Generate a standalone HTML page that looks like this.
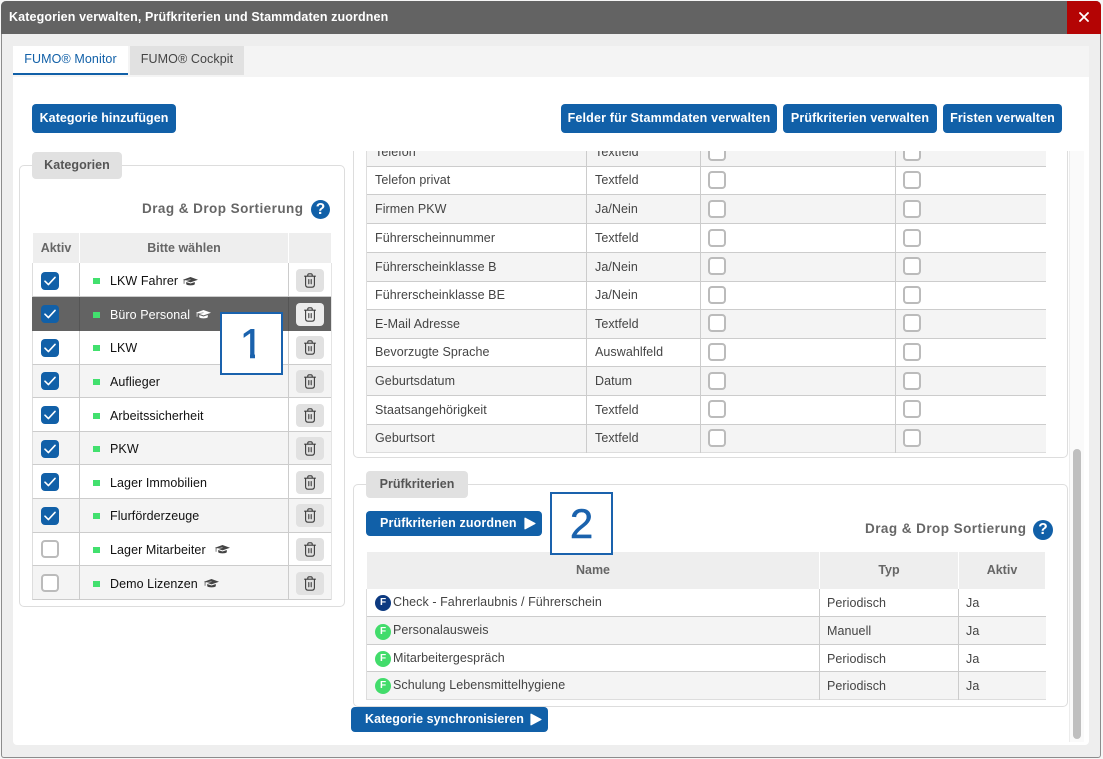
<!DOCTYPE html>
<html><head><meta charset="utf-8">
<style>
html,body{margin:0;padding:0}
body{width:1103px;height:759px;position:relative;overflow:hidden;background:#f6f6f6;font-family:"Liberation Sans",sans-serif;color:#444}
div,span,svg{position:absolute;box-sizing:border-box}
.t{white-space:nowrap;font-size:12.5px;line-height:16px;letter-spacing:.07px;color:#444}
.k{color:#111}
.b{font-weight:700;white-space:nowrap;line-height:16px;font-size:12.5px;letter-spacing:.12px}
.btn{background:#1160a8;border-radius:4px;color:#fff;font-weight:700;font-size:12.5px;letter-spacing:.12px;white-space:nowrap;text-align:center;line-height:29px;height:29px;top:104px}
.leg{background:#e1e1e1;border-radius:4px;color:#555;font-weight:700;font-size:12.5px;letter-spacing:.04px;text-align:center;line-height:27px;height:27px}
.fs{border:1px solid #ddd;border-radius:5px;background:#fff}
.hd{background:#eee;color:#666;font-weight:700;font-size:12.5px;letter-spacing:0;text-align:center;white-space:nowrap}
.row{left:32px;width:300px;border-bottom:1px solid #ccc;border-left:1px solid #ddd}
.s{background:#f4f4f4}
.cb{left:41px;width:18px;height:18px;border-radius:4px;background:#1160a8}
.cb svg{left:3px;top:4px}
.un{background:#fff;border:2px solid #bbb}
.dot{left:93px;width:7px;height:6px;background:#42e06e}
.tb{left:296px;width:28px;height:23px;background:#e1e1e1;border-radius:4px}
.tb svg{left:8px;top:4px}
.v{width:1px;background:#ccc}
.rr{left:367px;width:679px;border-bottom:1px solid #ccc}
.c2{width:18px;height:18px;border:2px solid #bbb;border-radius:4px;background:#fff}
.q{width:19px;height:19px;border-radius:50%;background:#1160a8;color:#fff;font-weight:700;font-size:15.5px;line-height:19px;text-align:center}
.f{left:375px;width:16px;height:16px;border-radius:50%;color:#fff;font-weight:700;font-size:10px;line-height:16px;text-align:center;background:#42dc6b}
.box{width:63px;height:63px;border:2px solid #1a62ad;background:#fff;color:#1a62ad;font-size:42px;line-height:59px;text-align:center;z-index:5;-webkit-text-stroke:.5px #1a62ad}
.cov{background:#fff;height:6px;top:40px}
</style></head><body>
<svg width="0" height="0" style="left:0;top:0"><defs>
<symbol id="chk" viewBox="0 0 12 10"><path d="M1 5.2L4.4 8.6L11 1.4" fill="none" stroke="#fff" stroke-width="1.6" stroke-linecap="round" stroke-linejoin="round"/></symbol>
<symbol id="tr" viewBox="0 0 12 15"><path d="M.6 3.2H11.4M3.8 3V2Q3.8 .8 5 .8H7Q8.2 .8 8.2 2V3M1.6 3.2V11.6Q1.6 14.2 4.2 14.2H7.8Q10.4 14.2 10.4 11.6V3.2M4.8 6.6V10.8M7.2 6.6V10.8" fill="none" stroke="#3c3c3c" stroke-width="1.1" stroke-linecap="round"/></symbol>
<symbol id="cap" viewBox="0 0 15 9"><path d="M7.5 0L15 2.7L7.5 5.4L2.8 3.7L7.6 3L7.4 2.5L1.4 3.4V6.8H.7V3.1L0 2.7ZM3.2 5L7.5 6.5L11.8 5V7.2C10.5 8.7 4.5 8.7 3.2 7.2Z" fill="currentColor"/></symbol>
</defs></svg>

<div style="left:1px;top:1px;width:1100px;height:757px;background:#eee;border:1px solid #8c8c8c;border-top:0;border-radius:5px 5px 3px 3px;overflow:hidden"></div>
<div style="left:1px;top:1px;width:1100px;height:33px;background:#636363;border-radius:5px 5px 0 0"></div>
<div class="b" style="left:9px;top:9px;color:#fff">Kategorien verwalten, Prüfkriterien und Stammdaten zuordnen</div>
<div style="left:1067px;top:1px;width:34px;height:33px;background:#b40404;border-radius:0 5px 0 0"></div>
<svg style="left:1079px;top:12px" width="10" height="10" viewBox="0 0 10 10"><path d="M1 1L9 9M9 1L1 9" stroke="#fff" stroke-width="1.8" stroke-linecap="round"/></svg>

<div style="left:13px;top:46px;width:1076px;height:699px;background:#fff;border-radius:0 0 4px 4px"></div>
<div style="left:13px;top:46px;width:1076px;height:31px;background:#f4f4f4"></div>
<div style="left:13px;top:46px;width:115px;height:29px;background:#fff;border-bottom:2px solid #1160a8;color:#1160a8;font-size:12.5px;letter-spacing:.1px;text-align:center;line-height:26px;white-space:nowrap">FUMO® Monitor</div>
<div style="left:130px;top:46px;width:114px;height:29px;background:#e1e1e1;color:#444;font-size:12.5px;letter-spacing:.1px;text-align:center;line-height:27px;white-space:nowrap">FUMO® Cockpit</div>

<div class="btn" style="left:32px;width:144px;letter-spacing:.05px">Kategorie hinzufügen</div>
<div class="btn" style="left:561px;width:216px;letter-spacing:.18px">Felder für Stammdaten verwalten</div>
<div class="btn" style="left:783px;width:154px">Prüfkriterien verwalten</div>
<div class="btn" style="left:943px;width:119px">Fristen verwalten</div>

<!-- Kategorien -->
<div class="fs" style="left:19px;top:165px;width:326px;height:442px"></div>
<div class="leg" style="left:32px;top:152px;width:90px">Kategorien</div>
<div class="b" style="left:142px;top:201px;font-size:13.5px;color:#666;letter-spacing:.45px">Drag &amp; Drop Sortierung</div>
<div class="q" style="left:311px;top:200px">?</div>

<div class="hd" style="left:33px;top:233px;width:46px;height:30px;line-height:30px">Aktiv</div>
<div class="hd" style="left:80px;top:233px;width:208px;height:30px;line-height:30px">Bitte wählen</div>
<div class="hd" style="left:289px;top:233px;width:42px;height:30px"></div>

<div class="row" style="top:263px;height:34px"></div>
<div class="row" style="top:297px;height:34px;background:#636363;border-color:#636363"></div>
<div class="row" style="top:331px;height:34px"></div>
<div class="row s" style="top:365px;height:33px"></div>
<div class="row" style="top:398px;height:34px"></div>
<div class="row s" style="top:432px;height:33px"></div>
<div class="row" style="top:465px;height:34px"></div>
<div class="row s" style="top:499px;height:34px"></div>
<div class="row" style="top:533px;height:33px"></div>
<div class="row s" style="top:566px;height:34px"></div>
<div class="v" style="left:79px;top:263px;height:337px"></div>
<div class="v" style="left:288px;top:263px;height:337px"></div>
<div class="v" style="left:331px;top:263px;height:337px;background:#e4e4e4"></div>
<div class="v" style="left:79px;top:297px;height:34px;background:#555"></div>
<div class="v" style="left:288px;top:297px;height:34px;background:#555"></div>

<div class="cb" style="top:272px"><svg width="12" height="10"><use href="#chk"/></svg></div>
<div class="cb" style="top:305px"><svg width="12" height="10"><use href="#chk"/></svg></div>
<div class="cb" style="top:339px"><svg width="12" height="10"><use href="#chk"/></svg></div>
<div class="cb" style="top:372px"><svg width="12" height="10"><use href="#chk"/></svg></div>
<div class="cb" style="top:406px"><svg width="12" height="10"><use href="#chk"/></svg></div>
<div class="cb" style="top:440px"><svg width="12" height="10"><use href="#chk"/></svg></div>
<div class="cb" style="top:473px"><svg width="12" height="10"><use href="#chk"/></svg></div>
<div class="cb" style="top:507px"><svg width="12" height="10"><use href="#chk"/></svg></div>
<div class="cb un" style="top:540px"></div>
<div class="cb un" style="top:574px"></div>

<div class="dot" style="top:278px"></div>
<div class="dot" style="top:312px"></div>
<div class="dot" style="top:345px"></div>
<div class="dot" style="top:379px"></div>
<div class="dot" style="top:413px"></div>
<div class="dot" style="top:446px"></div>
<div class="dot" style="top:480px"></div>
<div class="dot" style="top:513px"></div>
<div class="dot" style="top:547px"></div>
<div class="dot" style="top:581px"></div>

<div class="t k" style="left:110px;top:273px">LKW Fahrer</div>
<div class="t" style="left:110px;top:307px;color:#fff">Büro Personal</div>
<div class="t k" style="left:110px;top:340px">LKW</div>
<div class="t k" style="left:110px;top:374px">Auflieger</div>
<div class="t k" style="left:110px;top:408px">Arbeitssicherheit</div>
<div class="t k" style="left:110px;top:441px">PKW</div>
<div class="t k" style="left:110px;top:475px">Lager Immobilien</div>
<div class="t k" style="left:110px;top:508px">Flurförderzeuge</div>
<div class="t k" style="left:110px;top:542px">Lager Mitarbeiter</div>
<div class="t k" style="left:110px;top:576px">Demo Lizenzen</div>

<svg style="left:183px;top:277px;color:#444" width="15" height="9"><use href="#cap"/></svg>
<svg style="left:196px;top:310px;color:#fff" width="15" height="9"><use href="#cap"/></svg>
<svg style="left:215px;top:545px;color:#444" width="15" height="9"><use href="#cap"/></svg>
<svg style="left:204px;top:579px;color:#444" width="15" height="9"><use href="#cap"/></svg>

<div class="tb" style="top:269px"><svg width="12" height="15"><use href="#tr"/></svg></div>
<div class="tb" style="top:303px;background:#ececec"><svg width="12" height="15"><use href="#tr"/></svg></div>
<div class="tb" style="top:336px"><svg width="12" height="15"><use href="#tr"/></svg></div>
<div class="tb" style="top:370px"><svg width="12" height="15"><use href="#tr"/></svg></div>
<div class="tb" style="top:404px"><svg width="12" height="15"><use href="#tr"/></svg></div>
<div class="tb" style="top:437px"><svg width="12" height="15"><use href="#tr"/></svg></div>
<div class="tb" style="top:471px"><svg width="12" height="15"><use href="#tr"/></svg></div>
<div class="tb" style="top:504px"><svg width="12" height="15"><use href="#tr"/></svg></div>
<div class="tb" style="top:538px"><svg width="12" height="15"><use href="#tr"/></svg></div>
<div class="tb" style="top:572px"><svg width="12" height="15"><use href="#tr"/></svg></div>

<div class="box" style="left:220px;top:312px">1<div class="cov" style="left:14px;width:14px"></div><div class="cov" style="left:33px;width:14px"></div></div>

<!-- Stammdaten clipped -->
<div style="left:0;top:151px;width:1103px;height:310px;overflow:hidden">
 <div style="left:353px;top:-30px;width:715px;height:337px;border:1px solid #ddd;border-radius:5px"></div>
 <div class="rr s" style="top:0;height:16px"></div>
 <div class="rr" style="top:16px;height:28px"></div>
 <div class="rr s" style="top:44px;height:29px"></div>
 <div class="rr" style="top:73px;height:29px"></div>
 <div class="rr s" style="top:102px;height:29px"></div>
 <div class="rr" style="top:131px;height:28px"></div>
 <div class="rr s" style="top:159px;height:29px"></div>
 <div class="rr" style="top:188px;height:28px"></div>
 <div class="rr s" style="top:216px;height:29px"></div>
 <div class="rr" style="top:245px;height:29px"></div>
 <div class="rr s" style="top:274px;height:28px;border-color:#ddd"></div>
 <div class="v" style="left:366px;top:0;height:302px;background:#ddd"></div>
 <div class="v" style="left:586px;top:0;height:302px"></div>
 <div class="v" style="left:700px;top:0;height:302px"></div>
 <div class="v" style="left:895px;top:0;height:302px"></div>

 <div class="t" style="left:375px;top:-7px">Telefon</div><div class="t" style="left:595px;top:-7px">Textfeld</div>
 <div class="t" style="left:375px;top:21px">Telefon privat</div><div class="t" style="left:595px;top:21px">Textfeld</div>
 <div class="t" style="left:375px;top:50px">Firmen PKW</div><div class="t" style="left:595px;top:50px">Ja/Nein</div>
 <div class="t" style="left:375px;top:79px">Führerscheinnummer</div><div class="t" style="left:595px;top:79px">Textfeld</div>
 <div class="t" style="left:375px;top:108px">Führerscheinklasse B</div><div class="t" style="left:595px;top:108px">Ja/Nein</div>
 <div class="t" style="left:375px;top:136px">Führerscheinklasse BE</div><div class="t" style="left:595px;top:136px">Ja/Nein</div>
 <div class="t" style="left:375px;top:165px">E-Mail Adresse</div><div class="t" style="left:595px;top:165px">Textfeld</div>
 <div class="t" style="left:375px;top:193px">Bevorzugte Sprache</div><div class="t" style="left:595px;top:193px">Auswahlfeld</div>
 <div class="t" style="left:375px;top:222px">Geburtsdatum</div><div class="t" style="left:595px;top:222px">Datum</div>
 <div class="t" style="left:375px;top:251px">Staatsangehörigkeit</div><div class="t" style="left:595px;top:251px">Textfeld</div>
 <div class="t" style="left:375px;top:279px">Geburtsort</div><div class="t" style="left:595px;top:279px">Textfeld</div>

 <div class="c2" style="left:708px;top:-8px"></div><div class="c2" style="left:903px;top:-8px"></div>
 <div class="c2" style="left:708px;top:20px"></div><div class="c2" style="left:903px;top:20px"></div>
 <div class="c2" style="left:708px;top:49px"></div><div class="c2" style="left:903px;top:49px"></div>
 <div class="c2" style="left:708px;top:78px"></div><div class="c2" style="left:903px;top:78px"></div>
 <div class="c2" style="left:708px;top:106px"></div><div class="c2" style="left:903px;top:106px"></div>
 <div class="c2" style="left:708px;top:135px"></div><div class="c2" style="left:903px;top:135px"></div>
 <div class="c2" style="left:708px;top:163px"></div><div class="c2" style="left:903px;top:163px"></div>
 <div class="c2" style="left:708px;top:192px"></div><div class="c2" style="left:903px;top:192px"></div>
 <div class="c2" style="left:708px;top:221px"></div><div class="c2" style="left:903px;top:221px"></div>
 <div class="c2" style="left:708px;top:249px"></div><div class="c2" style="left:903px;top:249px"></div>
 <div class="c2" style="left:708px;top:278px"></div><div class="c2" style="left:903px;top:278px"></div>
</div>

<!-- Prüfkriterien -->
<div class="fs" style="left:353px;top:484px;width:715px;height:223px"></div>
<div class="leg" style="left:366px;top:471px;width:102px">Prüfkriterien</div>
<div class="btn" style="left:366px;top:511px;width:176px;height:25px;line-height:25px;text-align:left;padding-left:14px">Prüfkriterien zuordnen</div>
<svg style="left:524px;top:517px" width="12" height="13" viewBox="0 0 12 13"><path d="M1 1.2L11 6.5L1 11.8Z" fill="#fff" stroke="#fff" stroke-width="1.2" stroke-linejoin="round"/></svg>
<div class="box" style="left:550px;top:492px">2</div>
<div class="b" style="left:865px;top:521px;font-size:13.5px;color:#666;letter-spacing:.45px">Drag &amp; Drop Sortierung</div>
<div class="q" style="left:1033px;top:520px;width:20px;height:20px;line-height:20px">?</div>

<div class="hd" style="left:367px;top:552px;width:452px;height:37px;line-height:37px">Name</div>
<div class="hd" style="left:820px;top:552px;width:138px;height:37px;line-height:37px">Typ</div>
<div class="hd" style="left:959px;top:552px;width:86px;height:37px;line-height:37px">Aktiv</div>

<div class="rr" style="top:589px;height:28px"></div>
<div class="rr s" style="top:617px;height:28px"></div>
<div class="rr" style="top:645px;height:27px"></div>
<div class="rr s" style="top:672px;height:28px;border-color:#ddd"></div>
<div class="v" style="left:366px;top:589px;height:111px;background:#ddd"></div>
<div class="v" style="left:819px;top:589px;height:111px"></div>
<div class="v" style="left:958px;top:589px;height:111px"></div>

<div class="f" style="top:595px;background:#0d3a80">F</div>
<div class="f" style="top:624px">F</div>
<div class="f" style="top:651px">F</div>
<div class="f" style="top:678px">F</div>
<div class="t" style="left:393px;top:594px">Check - Fahrerlaubnis / Führerschein</div>
<div class="t" style="left:393px;top:622px">Personalausweis</div>
<div class="t" style="left:393px;top:650px">Mitarbeitergespräch</div>
<div class="t" style="left:393px;top:677px">Schulung Lebensmittelhygiene</div>
<div class="t" style="left:827px;top:595px">Periodisch</div><div class="t" style="left:966px;top:595px">Ja</div>
<div class="t" style="left:827px;top:623px">Manuell</div><div class="t" style="left:966px;top:623px">Ja</div>
<div class="t" style="left:827px;top:651px">Periodisch</div><div class="t" style="left:966px;top:651px">Ja</div>
<div class="t" style="left:827px;top:678px">Periodisch</div><div class="t" style="left:966px;top:678px">Ja</div>

<div class="btn" style="left:351px;top:707px;width:197px;height:25px;line-height:25px;text-align:left;padding-left:14px;letter-spacing:.05px">Kategorie synchronisieren</div>
<svg style="left:530px;top:713px" width="12" height="13" viewBox="0 0 12 13"><path d="M1 1.2L11 6.5L1 11.8Z" fill="#fff" stroke="#fff" stroke-width="1.2" stroke-linejoin="round"/></svg>

<!-- Scrollbar -->
<div style="left:1069px;top:151px;width:15px;height:591px;background:#fafafa;border-left:1px solid #ececec"></div>
<div style="left:1073px;top:449px;width:8px;height:290px;background:#bfbfbf;border-radius:4px"></div>
</body></html>
